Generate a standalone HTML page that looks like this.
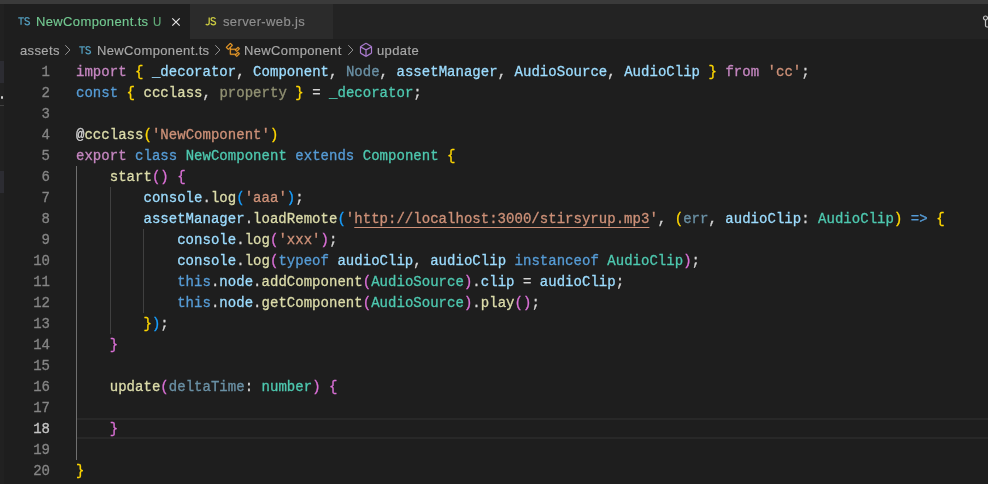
<!DOCTYPE html>
<html><head><meta charset="utf-8">
<style>
html,body{margin:0;padding:0;}
body{width:988px;height:484px;overflow:hidden;background:#1e1e1e;position:relative;font-family:"Liberation Sans",sans-serif;-webkit-font-smoothing:antialiased;}
.abs{position:absolute;}
#topstrip{left:0;top:0;width:988px;height:4px;background:#3a3a3a;}
#tabbar{left:0;top:4px;width:988px;height:35px;background:#232323;}
#leftcol{left:0;top:4px;width:4px;height:480px;background:#212121;}
#tab1{left:4px;top:4px;width:186px;height:35px;background:#1e1e1e;}
#tab2{left:190px;top:4px;width:143px;height:35px;background:#2b2b2b;}
.ui{font-size:13px;white-space:pre;line-height:16px;letter-spacing:0.37px;-webkit-text-stroke:0.15px;}
.tsic{font-size:11px;line-height:12px;color:#519aba;letter-spacing:-1px;-webkit-text-stroke:0.4px;}
.jsic{font-size:11px;line-height:12px;color:#cbcb41;letter-spacing:-1px;-webkit-text-stroke:0.4px;}
#code{left:0;top:62px;width:988px;}
.ln{position:absolute;height:21px;line-height:21px;font-family:"Liberation Mono",monospace;font-size:14px;white-space:pre;letter-spacing:0.03px;-webkit-text-stroke:0.3px;}
.num{left:0;width:50px;text-align:right;color:#858585;}
.txt{left:76px;color:#d4d4d4;}
.guide{position:absolute;width:1px;background:#404040;}
.kc{color:#c586c0}.st{color:#569cd6}.v{color:#9cdcfe}.t{color:#4ec9b0}.f{color:#dcdcaa}.s{color:#ce9178}
.b1{color:#ffd700}.b2{color:#da70d6}.b3{color:#179fff}.dim{opacity:.6}
.lnk{text-decoration:underline;text-underline-offset:4px;}
</style></head><body>
<div id="root" style="position:absolute;left:0;top:0;width:988px;height:484px;will-change:transform;">
<div id="topstrip" class="abs"></div>
<div id="tabbar" class="abs"></div>
<div id="tab1" class="abs"></div>
<div id="tab2" class="abs"></div>
<div id="leftcol" class="abs"></div>
<div class="abs" style="left:0;top:61px;width:4px;height:22px;background:#2c2c32;"></div>
<div class="abs" style="left:1px;top:96px;width:2px;height:3px;background:#d0d0d0;border-radius:1px;"></div>
<div class="abs" style="left:0;top:105px;width:4px;height:1px;background:#404040;"></div>
<div class="abs" style="left:0;top:171px;width:4px;height:22px;background:#2c2c32;"></div>

<!-- tab 1 -->
<svg class="abs" style="left:17px;top:16px;" width="14" height="10" viewBox="0 0 14 10"><path d="M1.2 1.9H6.9M4.05 1.9V8.8" stroke="#519aba" stroke-width="1.3" fill="none"/><path d="M12.3 2.9C11.9 1.9 10.9 1.7 10.1 1.7C8.9 1.7 8.0 2.3 8.0 3.4C8.0 5.6 12.5 4.7 12.5 7.0C12.5 8.2 11.5 8.8 10.2 8.8C9.1 8.8 8.1 8.3 7.7 7.3" stroke="#519aba" stroke-width="1.3" fill="none"/></svg>
<div class="abs ui" style="left:36px;top:14px;color:#73c991;">NewComponent.ts</div>
<div class="abs ui" style="left:153.3px;top:14px;color:#62ad7a;transform:scaleX(0.88);transform-origin:left;">U</div>
<svg class="abs" style="left:171px;top:17px;" width="10" height="10" viewBox="0 0 10 10"><path d="M1.3 1.3L8.7 8.7M8.7 1.3L1.3 8.7" stroke="#e8e8e8" stroke-width="1.15"/></svg>
<!-- tab 2 -->
<svg class="abs" style="left:205px;top:16px;" width="14" height="10" viewBox="0 0 14 10"><path d="M4.2 1.5V6.7C4.2 8.2 3.5 8.8 2.4 8.8C1.7 8.8 1.2 8.5 0.8 8.0" stroke="#cbcb41" stroke-width="1.3" fill="none"/><path d="M10.4 2.9C10.0 1.9 9.0 1.7 8.2 1.7C7.0 1.7 6.1 2.3 6.1 3.4C6.1 5.6 10.6 4.7 10.6 7.0C10.6 8.2 9.6 8.8 8.3 8.8C7.2 8.8 6.2 8.3 5.8 7.3" stroke="#cbcb41" stroke-width="1.3" fill="none"/></svg>
<div class="abs ui" style="left:223px;top:14px;color:#8f8f8f;">server-web.js</div>

<!-- breadcrumbs -->
<div class="abs ui" style="left:20px;top:43px;color:#a9a9a9;">assets</div>
<svg class="abs" style="left:63px;top:44px;" width="9" height="12" viewBox="0 0 9 12"><path d="M2.3 1.2L6.9 6L2.3 10.8" fill="none" stroke="#a0a0a0" stroke-width="0.9"/></svg>
<svg class="abs" style="left:78px;top:45px;" width="14" height="10" viewBox="0 0 14 10"><path d="M1.2 1.9H6.9M4.05 1.9V8.8" stroke="#519aba" stroke-width="1.3" fill="none"/><path d="M12.3 2.9C11.9 1.9 10.9 1.7 10.1 1.7C8.9 1.7 8.0 2.3 8.0 3.4C8.0 5.6 12.5 4.7 12.5 7.0C12.5 8.2 11.5 8.8 10.2 8.8C9.1 8.8 8.1 8.3 7.7 7.3" stroke="#519aba" stroke-width="1.3" fill="none"/></svg>
<div class="abs ui" style="left:97px;top:43px;color:#a9a9a9;">NewComponent.ts</div>
<svg class="abs" style="left:213px;top:44px;" width="9" height="12" viewBox="0 0 9 12"><path d="M2.3 1.2L6.9 6L2.3 10.8" fill="none" stroke="#a0a0a0" stroke-width="0.9"/></svg>
<svg class="abs" style="left:225px;top:42px;" width="16" height="16" viewBox="0 0 16 16"><path fill="#ee9d28" stroke="#ee9d28" stroke-width="0.25" d="M11.34 9.71h.71l2.67-2.67v-.71L13.38 5h-.7l-1.82 1.81h-5V5.56l1.86-1.85V3l-2-2H5L1 5v.71l2 2h.71l1.14-1.15v5.79l.5.5H10v.52l1.33 1.34h.71l2.670-2.67v-.71L13.37 10h-.7l-1.86 1.85h-5v-4H10v.48l1.34 1.38zm1.69-3.65l.63.63-2 2-.63-.63 2-2zm0 5l.63.63-2 2-.63-.63 2-2zM3.350 6.65l-1.29-1.3 3.29-3.29 1.3 1.29-3.3 3.3z"/></svg>
<div class="abs ui" style="left:244px;top:43px;color:#a9a9a9;">NewComponent</div>
<svg class="abs" style="left:346px;top:44px;" width="9" height="12" viewBox="0 0 9 12"><path d="M2.3 1.2L6.9 6L2.3 10.8" fill="none" stroke="#a0a0a0" stroke-width="0.9"/></svg>
<svg class="abs" style="left:358px;top:42px;" width="16" height="16" viewBox="0 0 16 16"><path fill="#b180d7" stroke="#b180d7" stroke-width="0.2" d="M13.51 4l-5-3h-1l-5 3-.49.86v6l.49.85 5 3h1l5-3 .49-.85v-6L13.51 4zm-6 9.56l-4.5-2.7V5.7l4.5 2.45v5.41zM3.270 4.7l4.74-2.84 4.74 2.84-4.74 2.59L3.270 4.7zm9.74 6.16l-4.5 2.7V8.15l4.5-2.450v5.16z"/></svg>
<div class="abs ui" style="left:377px;top:43px;color:#a9a9a9;">update</div>

<!-- git compare icon at right edge -->
<svg class="abs" style="left:982px;top:14.5px;" width="8" height="14" viewBox="0 0 8 14"><circle cx="3.5" cy="3" r="2" fill="none" stroke="#c5c5c5" stroke-width="1.2"/><path d="M3.5 5V10.5Q3.5 12 5 12H8" fill="none" stroke="#c5c5c5" stroke-width="1.2"/></svg>

<!-- current line highlight (line 18) -->
<div class="abs" style="left:77px;top:418px;width:911px;height:17px;border-top:2px solid #282828;border-bottom:2px solid #282828;"></div>

<!-- indent guides -->
<div id="guides">
<div class="guide" style="left:76px;top:166px;height:294px;background:#707070;"></div>
<div class="guide" style="left:110px;top:187px;height:147px;"></div>
<div class="guide" style="left:143px;top:229px;height:84px;"></div>
</div>

<div id="code" class="abs">
<div class="ln num" style="top:0px">1</div>
<div class="ln num" style="top:21px">2</div>
<div class="ln num" style="top:42px">3</div>
<div class="ln num" style="top:63px">4</div>
<div class="ln num" style="top:84px">5</div>
<div class="ln num" style="top:105px">6</div>
<div class="ln num" style="top:126px">7</div>
<div class="ln num" style="top:147px">8</div>
<div class="ln num" style="top:168px">9</div>
<div class="ln num" style="top:189px">10</div>
<div class="ln num" style="top:210px">11</div>
<div class="ln num" style="top:231px">12</div>
<div class="ln num" style="top:252px">13</div>
<div class="ln num" style="top:273px">14</div>
<div class="ln num" style="top:294px">15</div>
<div class="ln num" style="top:315px">16</div>
<div class="ln num" style="top:336px">17</div>
<div class="ln num" style="top:357px;color:#c6c6c6">18</div>
<div class="ln num" style="top:378px">19</div>
<div class="ln num" style="top:399px">20</div>

<div class="ln txt" style="top:0px"><span class="kc">import</span> <span class="b1">{</span> <span class="v">_decorator</span>, <span class="v">Component</span>, <span class="v dim">Node</span>, <span class="v">assetManager</span>, <span class="v">AudioSource</span>, <span class="v">AudioClip</span> <span class="b1">}</span> <span class="kc">from</span> <span class="s">'cc'</span>;</div>
<div class="ln txt" style="top:21px"><span class="st">const</span> <span class="b1">{</span> <span class="f">ccclass</span>, <span class="f dim">property</span> <span class="b1">}</span> = <span class="t">_decorator</span>;</div>
<div class="ln txt" style="top:63px">@<span class="f">ccclass</span><span class="b1">(</span><span class="s">'NewComponent'</span><span class="b1">)</span></div>
<div class="ln txt" style="top:84px"><span class="kc">export</span> <span class="st">class</span> <span class="t">NewComponent</span> <span class="st">extends</span> <span class="t">Component</span> <span class="b1">{</span></div>
<div class="ln txt" style="top:105px">    <span class="f">start</span><span class="b2">()</span> <span class="b2">{</span></div>
<div class="ln txt" style="top:126px">        <span class="v">console</span>.<span class="f">log</span><span class="b3">(</span><span class="s">'aaa'</span><span class="b3">)</span>;</div>
<div class="ln txt" style="top:147px">        <span class="v">assetManager</span>.<span class="f">loadRemote</span><span class="b3">(</span><span class="s">'<span class="lnk">http://localhost:3000/stirsyrup.mp3</span>'</span>, <span class="b1">(</span><span class="v dim">err</span>, <span class="v">audioClip</span>: <span class="t">AudioClip</span><span class="b1">)</span> <span class="st">=&gt;</span> <span class="b1">{</span></div>
<div class="ln txt" style="top:168px">            <span class="v">console</span>.<span class="f">log</span><span class="b2">(</span><span class="s">'xxx'</span><span class="b2">)</span>;</div>
<div class="ln txt" style="top:189px">            <span class="v">console</span>.<span class="f">log</span><span class="b2">(</span><span class="st">typeof</span> <span class="v">audioClip</span>, <span class="v">audioClip</span> <span class="st">instanceof</span> <span class="t">AudioClip</span><span class="b2">)</span>;</div>
<div class="ln txt" style="top:210px">            <span class="st">this</span>.<span class="v">node</span>.<span class="f">addComponent</span><span class="b2">(</span><span class="t">AudioSource</span><span class="b2">)</span>.<span class="v">clip</span> = <span class="v">audioClip</span>;</div>
<div class="ln txt" style="top:231px">            <span class="st">this</span>.<span class="v">node</span>.<span class="f">getComponent</span><span class="b2">(</span><span class="t">AudioSource</span><span class="b2">)</span>.<span class="f">play</span><span class="b2">()</span>;</div>
<div class="ln txt" style="top:252px">        <span class="b1">}</span><span class="b3">)</span>;</div>
<div class="ln txt" style="top:273px">    <span class="b2">}</span></div>
<div class="ln txt" style="top:315px">    <span class="f">update</span><span class="b2">(</span><span class="v dim">deltaTime</span>: <span class="t">number</span><span class="b2">)</span> <span class="b2">{</span></div>
<div class="ln txt" style="top:357px">    <span class="b2">}</span></div>
<div class="ln txt" style="top:399px"><span class="b1">}</span></div>
</div>
</div>
</body></html>
